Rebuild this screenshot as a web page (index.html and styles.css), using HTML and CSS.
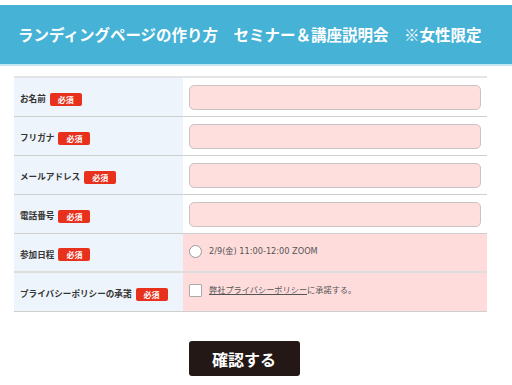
FILE: index.html
```html
<!DOCTYPE html>
<html>
<head>
  <title>セミナー＆講座説明会</title>
  <link rel="stylesheet" href="styles.css">
</head>
<body>
  <div class="header">
    <h1>ランディングページの作り方　セミナー＆講座説明会　※女性限定</h1>
  </div>

  <form class="entry-form">
    <table class="form-table">
      <tr>
        <th><span class="label">お名前</span><span class="req">必須</span></th>
        <td><input type="text" name="name"></td>
      </tr>
      <tr>
        <th><span class="label">フリガナ</span><span class="req">必須</span></th>
        <td><input type="text" name="kana"></td>
      </tr>
      <tr>
        <th><span class="label">メールアドレス</span><span class="req">必須</span></th>
        <td><input type="text" name="email"></td>
      </tr>
      <tr>
        <th><span class="label">電話番号</span><span class="req">必須</span></th>
        <td><input type="text" name="tel"></td>
      </tr>
      <tr class="choice-row thick">
        <th><span class="label">参加日程</span><span class="req">必須</span></th>
        <td>
          <label class="choice"><span class="radio"></span>2/9(金) 11:00-12:00 ZOOM</label>
        </td>
      </tr>
      <tr class="choice-row">
        <th><span class="label">プライバシーポリシーの承諾</span><span class="req">必須</span></th>
        <td>
          <label class="choice"><span class="check"></span><a href="#">弊社プライバシーポリシー</a>に承諾する。</label>
        </td>
      </tr>
    </table>

    <div class="actions">
      <button type="button" class="submit">確認する</button>
    </div>
  </form>
</body>
</html>
```

FILE: styles.css
```css
body {
  margin: 0;
  background: #fff;
  font-family: "Noto Sans CJK JP", "Noto Sans", sans-serif;
  color: #333;
}

.header {
  margin-top: 5px;
  height: 59px;
  background-color: #45b2d6;
  border-bottom: 2px solid #c4e6f1;
  display: flex;
  align-items: center;
  padding-left: 18px;
}

.header h1 {
  margin: 0;
  color: #fff;
  font-size: 15.5px;
  font-weight: bold;
  line-height: 1;
  white-space: nowrap;
}

.entry-form {
  padding: 10px 25px 0 14px;
}

.form-table {
  width: 473px;
  border-collapse: collapse;
  border-top: 2px solid #e2e4e6;
}

.form-table th,
.form-table td {
  height: 38px;
  line-height: 1;
  border-bottom: 1px solid #cfcfcf;
}

.form-table th {
  width: 163px;
  padding: 0 0 0 6px;
  background-color: #edf4fb;
  text-align: left;
  font-weight: normal;
}

.form-table td {
  padding: 0 6px;
}

.form-table .thick th,
.form-table .thick td {
  height: 37px;
  border-bottom: 2px solid #dedede;
}

.label {
  font-size: 8.6px;
  font-weight: bold;
  color: #333;
  vertical-align: middle;
}

.req {
  display: inline-block;
  margin-left: 4px;
  width: 32px;
  height: 13px;
  line-height: 13px;
  background-color: #e8311d;
  color: #fff;
  font-size: 8px;
  font-weight: bold;
  text-align: center;
  border-radius: 2px;
  vertical-align: middle;
}

.form-table input[type="text"] {
  display: block;
  width: 100%;
  height: 25px;
  margin: 0;
  box-sizing: border-box;
  background-color: #ffdede;
  border: 1px solid #c9c3c3;
  border-radius: 5px;
}

.choice-row td {
  height: 27px;
  background-color: #ffdcdc;
  vertical-align: top;
  padding-top: 11px;
}

.form-table .thick td {
  height: 26px;
}

.choice {
  display: flex;
  align-items: center;
  font-family: "DejaVu Sans", "Noto Sans CJK JP", sans-serif;
  font-size: 8.2px;
  color: #555;
}

.choice a {
  color: #555;
  text-decoration: underline;
}

.radio {
  width: 11px;
  height: 11px;
  margin-right: 7px;
  border: 1px solid #999;
  border-radius: 50%;
  background: #fff;
}

.check {
  width: 11px;
  height: 11px;
  margin-right: 7px;
  border: 1px solid #aaa;
  border-radius: 1px;
  background: #fff;
}

.actions {
  display: flex;
  justify-content: center;
  padding: 29px 13px 0 0;
}

.submit {
  width: 111px;
  height: 35px;
  background-color: #231815;
  color: #fff;
  border: none;
  border-radius: 3px;
  font-family: "Noto Sans CJK JP", sans-serif;
  font-size: 16px;
  font-weight: bold;
}
```
